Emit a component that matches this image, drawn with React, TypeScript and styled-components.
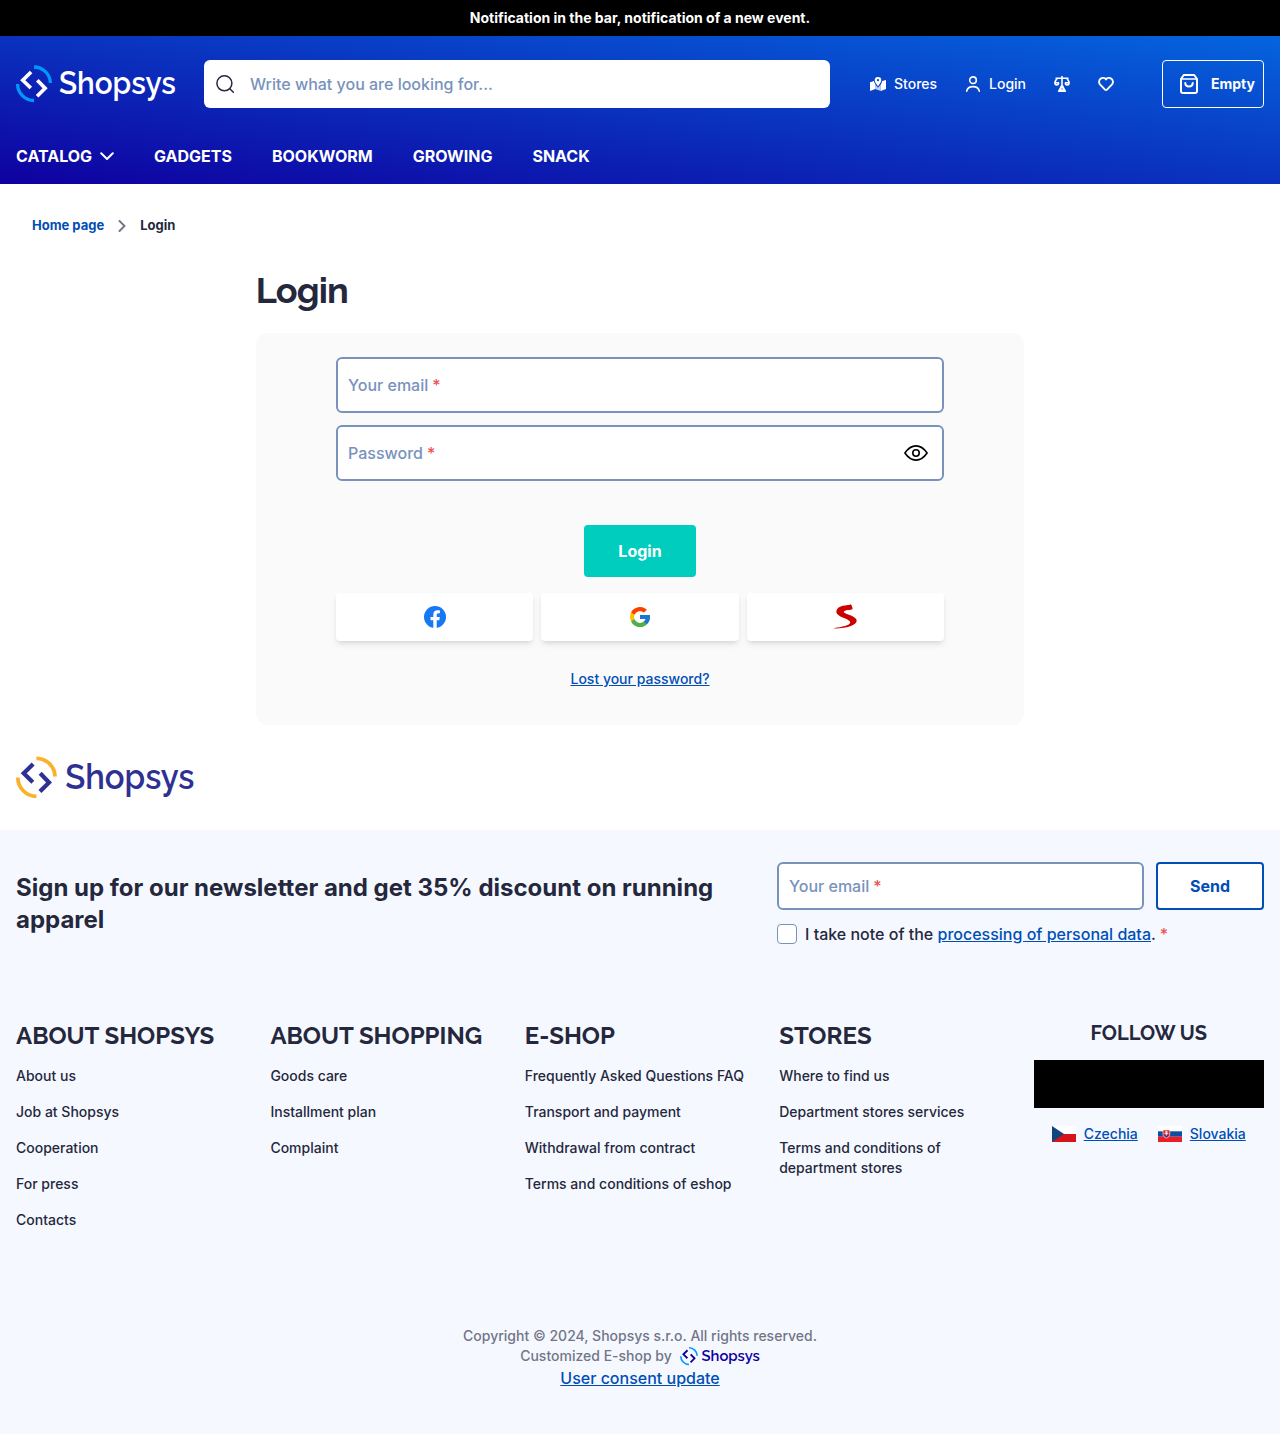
import React from "react";
import styled, { createGlobalStyle } from "styled-components";

const Global = createGlobalStyle`
  *, *::before, *::after { box-sizing: border-box; }
  body { margin: 0; background: #fff; color: #25283d; font: 500 16px/24px Inter, sans-serif; }
  h1, h2, h3, p, ul { margin: 0; padding: 0; }
  ul { list-style: none; }
  button, input { font: inherit; }
  svg { display: block; flex: none; }
`;

const titleFont = `Raleway, Lato, sans-serif`;

const NotificationBar = styled.div`
  height: 36px; background: #000; color: #fff;
  display: flex; align-items: center; justify-content: center;
  font-size: 14px; font-weight: 700; line-height: 20px;
`;
const Header = styled.header`
  height: 148px; padding: 24px 16px 0; color: #fff;
  background: linear-gradient(to top right, #0f00a0 0%, #0564de 100%);
`;
const HeaderRow = styled.div`display: flex; align-items: center; height: 48px;`;
const LogoLink = styled.a`display: block; width: 160px; margin-right: 28px;`;
const Search = styled.label`
  width: 626px; height: 48px; display: flex; align-items: center; gap: 15px;
  padding: 0 11px; border-radius: 6px; background: #fff; color: #25283d;
`;
const SearchInput = styled.input`
  flex: 1; border: 0; outline: 0; padding: 0; background: transparent; color: #25283d;
  &::placeholder { color: #7892bc; opacity: 1; }
`;
const Actions = styled.div`
  display: flex; align-items: center; gap: 28px; margin-left: 40px;
  font-size: 14px; font-weight: 500; line-height: 20px;
`;
const Action = styled.a`display: flex; align-items: center; gap: 8px; color: #fff;`;
const Cart = styled.a`
  margin-left: auto; width: 102px; height: 48px; padding-left: 14px;
  display: flex; align-items: center; gap: 10px;
  border: 1px solid #fff; border-radius: 4px; font-size: 14px; font-weight: 700;
`;
const Nav = styled.nav`
  display: flex; gap: 40px; margin-top: 36px; font-weight: 700; line-height: 24px;
`;
const NavLink = styled.a`display: flex; align-items: center; gap: 8px;`;

const Crumbs = styled.nav`
  display: flex; align-items: center; height: 52px; padding: 32px 32px 0;
  font-size: 13px; font-weight: 700; line-height: 18px;
  svg { margin: 0 13px; }
`;
const Crumb = styled.a<{ $current?: boolean }>`
  padding-bottom: 2px; color: ${(p) => (p.$current ? "#25283d" : "#004eb6")};
`;
const Main = styled.main`width: 768px; margin: 32px auto 0;`;
const Title = styled.h1`
  font: 700 36px/44px ${titleFont}; letter-spacing: -.9px; text-indent: -.2px;
`;
const Card = styled.form`
  margin-top: 21px; height: 392px; padding: 24px 80px; border-radius: 12px; background: #fafafa;
  display: flex; flex-direction: column; align-items: center;
`;
const Field = styled.label<{ $height: number }>`
  height: ${(p) => p.$height}px; width: 100%; display: flex; align-items: center; justify-content: space-between;
  padding: 0 14px 0 10px; border: 2px solid #7892bc; border-radius: 6px; background: #fff; color: #7892bc;
`;
const Fields = styled.div`width: 100%; display: grid; gap: 12px;`;
const Required = styled.span`color: #ec5353; margin-left: -.2px;`;
const Submit = styled.button`
  margin-top: 44px; width: 112px; height: 52px; border: 0; border-radius: 4px;
  background: #00cdbe; color: #fff; font-weight: 700;
`;
const Socials = styled.div`
  width: 100%; margin-top: 16px; display: grid; grid-template-columns: repeat(3, 1fr); gap: 8px;
`;
const Social = styled.a`
  height: 48px; display: flex; align-items: center; justify-content: center;
  background: #fff; border-radius: 4px;
  box-shadow: 0 4px 6px -1px rgba(0,0,0,.1), 0 2px 4px -2px rgba(0,0,0,.1);
`;
const TextLink = styled.a<{ $size?: number }>`
  color: #004eb6; text-decoration: underline; font-size: ${(p) => p.$size ?? 16}px;
`;
const LostPassword = styled.div`margin-top: 25px;`;
const LogoStrip = styled.div`height: 105px; padding: 32px 16px 0;`;

const Footer = styled.footer`background: #f5f9ff; height: 604px; padding: 32px 16px 0;`;
const Newsletter = styled.section`display: flex; justify-content: space-between; height: 84px;`;
const NewsTitle = styled.h2`
  width: 720px; padding-top: 10px; font-size: 24px; font-weight: 700; line-height: 32px;
`;
const NewsForm = styled.form`width: 487px;`;
const NewsRow = styled.div`display: flex; gap: 12px;`;
const Send = styled.button`
  flex: none; width: 108px; height: 48px; border: 2px solid #004eb6; border-radius: 4px;
  background: #fff; color: #004eb6; font-weight: 700;
`;
const Consent = styled.label`display: flex; align-items: center; gap: 8px; margin-top: 12px;`;
const Checkbox = styled.span`
  width: 20px; height: 20px; border: 1px solid #7892bc; border-radius: 4px; background: #fff;
`;
const Columns = styled.section`
  display: grid; grid-template-columns: repeat(5, minmax(0, 1fr)); gap: 24px; margin-top: 74px; height: 246px;
`;
const ColumnTitle = styled.h3`
  font: 700 24px/32px ${titleFont}; white-space: nowrap;
`;
const LinkList = styled.ul`
  margin-top: 14px; display: grid; gap: 16px; font-size: 14px; line-height: 20px;
`;
const LinkItem = styled.li`white-space: pre-line;`;
const Follow = styled.div`display: flex; flex-direction: column; align-items: center;`;
const FollowTitle = styled.h3`font: 700 20px/26px ${titleFont};`;
const SocialBlock = styled.div`width: 100%; height: 48px; margin-top: 14px; background: #000;`;
const Countries = styled.div`
  display: flex; gap: 20px; margin-top: 16px; line-height: 20px;
`;
const Country = styled.div`display: flex; align-items: center; gap: 8px;`;
const Legal = styled.div`
  margin-top: 60px; display: flex; flex-direction: column; align-items: center;
  font-size: 14px; line-height: 20px; color: #727588;
`;
const LegalRow = styled.div`display: flex; align-items: flex-start; gap: 8px; height: 22px;`;

const LogoSvg = styled.svg`overflow: visible;`;

type LogoProps = { width: number; height: number; mark: string; arc: string; box: string; textX?: number; textLength?: number; size?: number };
const Logo = ({ width, height, mark, arc, box, textX = 43, textLength = 116.8, size = 31 }: LogoProps) => (
  <LogoSvg width={width} height={height} viewBox={box} fill="none" aria-label="Shopsys">
    <path d="M1.600 18.900A16.600 16.600 0 0 0 18 35.500M18 2A16.500 16.500 0 0 1 34.400 18" stroke={arc} strokeWidth="3.300" />
    <path d="M15.100 7 6.800 15.200 14.800 23M21.300 15.200 29.100 23.200 21.100 31.200" stroke={mark} strokeWidth="3.700" />
    <text x={textX} y="29.300" textLength={textLength} lengthAdjust="spacingAndGlyphs" fill={mark}
      fontFamily="Raleway, Lato, sans-serif" fontWeight="600" fontSize={size}>Shopsys</text>
  </LogoSvg>
);

const Star = () => <Required>*</Required>;

const links = [
  { title: "ABOUT SHOPSYS", items: ["About us", "Job at Shopsys", "Cooperation", "For press", "Contacts"] },
  { title: "ABOUT SHOPPING", items: ["Goods care", "Installment plan", "Complaint"] },
  { title: "E-SHOP", items: ["Frequently Asked Questions FAQ", "Transport and payment", "Withdrawal from contract", "Terms and conditions of eshop"] },
  { title: "STORES", items: ["Where to find us", "Department stores services", "Terms and conditions of\ndepartment stores"] },
];

const StoresIcon = () => (
  <svg width="16" height="16" viewBox="0 0 16 16" fill="#fff">
    <path fillRule="evenodd" d="M8 1a3.300 3.300 0 0 1 3.300 3.300C11.300 6.100 8 10.300 8 10.300S4.700 6.100 4.700 4.300A3.300 3.300 0 0 1 8 1Zm0 2.100a1.100 1.100 0 1 0 0 2.200 1.100 1.100 0 0 0 0-2.200Z" />
    <path d="M0 6.200 3.900 5C4.300 6.200 4.700 7.300 5.300 8.300V13L0 15ZM12.200 5 16 4v9.100L10.800 15V8.400C11.400 7.400 12 6.200 12.200 5Z" />
    <path opacity=".75" d="M5.300 8.500 8 11.700l2.800-3.200V15l-5.500-2Z" />
  </svg>
);
const UserIcon = () => (
  <svg width="16" height="16" viewBox="0 0 16 16" fill="none" stroke="#fff" strokeWidth="1.600" strokeLinecap="round">
    <circle cx="8" cy="4.200" r="3.300" /><path d="M1.700 15.100C2.300 12 4.600 10.600 8 10.600s5.700 1.400 6.300 4.500" />
  </svg>
);
const ScaleIcon = () => (
  <svg width="16" height="16" viewBox="0 0 16 16" fill="none" stroke="#fff" strokeWidth="1.600" strokeLinejoin="round">
    <path d="M8 0v11M1.500 2.200h13M2.800 2.200C2.800 4 .9 4.700.9 6.800c0 2.800 3.800 2.800 3.800 0M13.200 2.200c0 1.800 1.900 2.500 1.900 4.600 0 2.800-3.800 2.800-3.800 0" />
    <path d="M1 6.800h4M11 6.800h4" />
    <path d="M7.300 10h1.400l1 2.500 1.600 2.700H4.700l1.600-2.700Z" fill="#fff" />
    <path d="M7.400 13h1.200" stroke="#0846c9" strokeWidth="1" />
  </svg>
);
const HeartIcon = () => (
  <svg width="16" height="16" viewBox="0 0 16 16" fill="none" stroke="#fff" strokeWidth="1.900" strokeLinejoin="round">
    <path d="M8 3.400C6.800 1.700 4.500 1.400 2.800 2.600.6 4.300.6 6.900 2.200 8.700L7 13.700c.6.600 1.400.6 2 0l4.800-5c1.600-1.800 1.600-4.400-.6-6.100C11.500 1.400 9.200 1.700 8 3.400Z" />
  </svg>
);
const CartIcon = () => (
  <svg width="24" height="24" viewBox="0 0 24 24" fill="none" stroke="#fff" strokeWidth="2" strokeLinecap="round" strokeLinejoin="round">
    <path d="M6.800 3h10.400L20 7v12.200A1.800 1.800 0 0 1 18.200 21H5.800A1.800 1.800 0 0 1 4 19.200V7Z" />
    <path d="M4 7h16" strokeWidth="1.600" /><path d="M8.300 11c0 4.600 7.400 4.600 7.400 0" />
  </svg>
);

export default function App() {
  return (
    <>
      <Global />
      <NotificationBar>Notification in the bar, notification of a new event.</NotificationBar>
      <Header>
        <HeaderRow>
          <LogoLink>
            <Logo width={160} height={40} box="0 -1 160 40" mark="#fff" arc="#0097ff" />
          </LogoLink>
          <Search>
            <svg width="20" height="20" viewBox="0 0 20 20" fill="none" stroke="#25283d" strokeWidth="1.500" strokeLinecap="round">
              <circle cx="9.400" cy="9.300" r="7.500" /><path d="m14.800 14.800 3.500 3.500" />
            </svg>
            <SearchInput placeholder="Write what you are looking for..." />
          </Search>
          <Actions>
            <Action><StoresIcon />Stores</Action>
            <Action><UserIcon />Login</Action>
            <Action><ScaleIcon /></Action>
            <Action><HeartIcon /></Action>
          </Actions>
          <Cart><CartIcon />Empty</Cart>
        </HeaderRow>
        <Nav>
          <NavLink>CATALOG
            <svg width="14" height="14" viewBox="0 0 14 14" fill="none" stroke="#fff" strokeWidth="2" strokeLinecap="round" strokeLinejoin="round"><path d="m1.200 4.200 5.800 5.800 5.800-5.800" /></svg>
          </NavLink>
          <NavLink>GADGETS</NavLink><NavLink>BOOKWORM</NavLink><NavLink>GROWING</NavLink><NavLink>SNACK</NavLink>
        </Nav>
      </Header>

      <Crumbs>
        <Crumb>Home page</Crumb>
        <svg width="10" height="12" viewBox="0 0 10 12" fill="none" stroke="#727588" strokeWidth="1.900" strokeLinecap="round" strokeLinejoin="round"><path d="m2.500 1 5 5-5 5" /></svg>
        <Crumb $current>Login</Crumb>
      </Crumbs>
      <Main>
        <Title>Login</Title>
        <Card>
          <Fields>
            <Field $height={56}><span>Your email <Star /></span></Field>
            <Field $height={56}>
              <span>Password <Star /></span>
              <svg width="24" height="16" viewBox="0 0 24 16" fill="none" stroke="#000" strokeWidth="1.600" strokeLinejoin="round">
                <path d="M.9 8C4 3.500 7.700.9 12 .9S20 3.500 23.100 8C20 12.500 16.300 15.100 12 15.100S4 12.500.9 8Z" /><circle cx="12" cy="8" r="3.200" />
              </svg>
            </Field>
          </Fields>
          <Submit type="button">Login</Submit>
          <Socials>
            <Social>
              <svg width="24" height="24" viewBox="0 0 24 24"><circle cx="12" cy="12" r="11" fill="#1877f2" /><path fill="#fff" d="m16.300 15.200.5-3.200h-3.100V9.900c0-.9.5-1.700 1.800-1.700h1.400V5.500s-1.300-.2-2.500-.2c-2.500 0-4.100 1.500-4.100 4.200V12H7.500v3.200h2.800v7.700a11 11 0 0 0 3.400 0v-7.700Z" /></svg>
            </Social>
            <Social>
              <svg width="24" height="24" viewBox="0 0 48 48">
                <path fill="#ffc107" d="M43.600 20H24v8h11.300C33.700 32.700 29.200 36 24 36a12 12 0 1 1 7.900-21l5.700-5.700A20 20 0 1 0 43.600 20Z" />
                <path fill="#ff3d00" d="m6.300 14.700 6.600 4.800A12 12 0 0 1 31.900 15l5.700-5.700A20 20 0 0 0 6.300 14.700Z" />
                <path fill="#4caf50" d="M24 44c5.200 0 9.900-2 13.400-5.200l-6.200-5.200A12 12 0 0 1 12.700 28l-6.500 5A20 20 0 0 0 24 44Z" />
                <path fill="#1976d2" d="M43.600 20H24v8h11.300a12 12 0 0 1-4.100 5.600l6.200 5.200C37 39.200 44 34 44 24c0-1.300-.1-2.700-.4-4Z" />
              </svg>
            </Social>
            <Social>
              <svg width="24" height="26" viewBox="-1 1 24 26"><path fill="#c00" d="M16.400 1.200c1.300.1 2.600 4.500 2 5.100-.9.700-8.300.7-8.700 2.500-.3 1.700 9.600 3 12.400 7.200 2.800 4.700-5.200 9.200-21.600 9.500-.6 0-.5-.5 0-.6 7.100-.9 15.600-2.700 15.700-5.500C16.300 15.800 2.700 14.400 2.400 9.100 2.100 4.300 7.600 2.700 12.600 2.200c1.700-.2 3.300-.4 3.800-1Z" /></svg>
            </Social>
          </Socials>
          <LostPassword><TextLink $size={14}>Lost your password?</TextLink></LostPassword>
        </Card>
      </Main>
      <LogoStrip>
        <Logo width={180} height={48} box="0 .8 158.600 42.300" mark="#2e3192" arc="#fbb12c" textX={43.300} textLength={114} size={30.500} />
      </LogoStrip>

      <Footer>
        <Newsletter>
          <NewsTitle>Sign up for our newsletter and get 35% discount on running apparel</NewsTitle>
          <NewsForm>
            <NewsRow>
              <Field $height={48}><span>Your email <Star /></span></Field>
              <Send type="button">Send</Send>
            </NewsRow>
            <Consent><Checkbox /><span>I take note of the <TextLink>processing of personal data</TextLink>. <Star /></span></Consent>
          </NewsForm>
        </Newsletter>
        <Columns>
          {links.map((c) => (
            <div key={c.title}>
              <ColumnTitle>{c.title}</ColumnTitle>
              <LinkList>{c.items.map((i) => <LinkItem key={i}>{i}</LinkItem>)}</LinkList>
            </div>
          ))}
          <Follow>
            <FollowTitle>FOLLOW US</FollowTitle>
            <SocialBlock />
            <Countries>
              <Country>
                <svg width="24" height="16" viewBox="0 0 24 16"><path fill="#fff" d="M0 0h24v8H0z" /><path fill="#d7141a" d="M0 8h24v8H0z" /><path fill="#11457e" d="m0 0 12 8-12 8z" /></svg>
                <TextLink $size={14}>Czechia</TextLink>
              </Country>
              <Country>
                <svg width="24" height="16" viewBox="0 0 24 16"><path fill="#fff" d="M0 0h24v6H0z" /><path fill="#0b4ea2" d="M0 5.300h24v5.400H0z" /><path fill="#ee1c25" d="M0 10.700h24V16H0z" /><path d="M5 3.900h6.800v4.400c0 2-1.500 3-3.400 3.900C6.500 11.300 5 10.300 5 8.300Z" fill="#ee1c25" stroke="#fff" strokeWidth=".6" /><path fill="#0b4ea2" d="M6 9.600c1-.7 1.500-.3 2.400-.8.900.5 1.400.1 2.400.8l-2.400 2z" /><path d="M8.400 4.600v5M6.900 6h3M6.500 7.600h3.800" stroke="#fff" strokeWidth=".8" /></svg>
                <TextLink $size={14}>Slovakia</TextLink>
              </Country>
            </Countries>
          </Follow>
        </Columns>
        <Legal>
          <div>Copyright © 2024, Shopsys s.r.o. All rights reserved.</div>
          <LegalRow>Customized E-shop by
            <Logo width={80} height={20} box="0 -1.500 160 40" mark="#0f00a0" arc="#0097ff" />
          </LegalRow>
          <TextLink>User consent update</TextLink>
        </Legal>
      </Footer>
    </>
  );
}
